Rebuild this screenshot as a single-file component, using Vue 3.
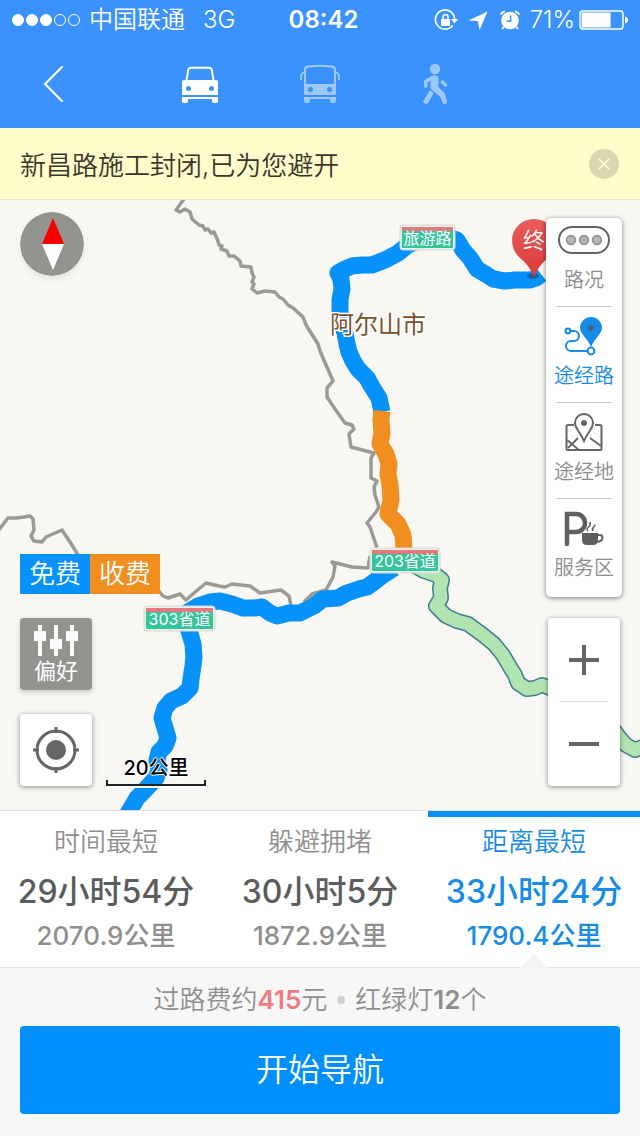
<template>
  <div class="route-page">
    <header class="header">
      <div class="status-bar">
        <div class="status-bar__left">
          <span class="status-bar__signal">
            <i
              v-for="n in 5"
              :key="n"
              class="status-bar__dot"
              :class="{ 'status-bar__dot--on': n <= 3 }"
            ></i>
          </span>
          <span class="status-bar__carrier">中国联通</span>
          <span class="status-bar__network">3G</span>
        </div>
        <span class="status-bar__time">08:42</span>
        <div class="status-bar__right">
          <svg class="status-bar__icon" viewBox="0 0 24 24">
            <path d="M18.6 17.4A9.6 9.6 0 1 1 20.6 11" fill="none" stroke="#fff" stroke-width="1.6" />
            <path d="M16.8 11H24L20.4 15.5Z" fill="#fff" />
            <rect x="7" y="11" width="9" height="7" rx="1" fill="#fff" />
            <path d="M9 11V9a2.5 2.5 0 0 1 5 0V11" fill="none" stroke="#fff" stroke-width="1.5" />
          </svg>
          <svg class="status-bar__icon" viewBox="0 0 24 24">
            <path d="M21.5 3.5L2.5 12.4L11.8 13L13.6 22Z" fill="#fff" />
          </svg>
          <svg class="status-bar__icon" viewBox="0 0 24 24">
            <circle cx="12" cy="12.5" r="8.8" fill="#fff" />
            <path d="M2.6 6.6A6 6 0 0 1 7 3.4M21.4 6.6A6 6 0 0 0 17 3.4M5.8 18.8L4 21M18.2 18.8L20 21" stroke="#fff" stroke-width="1.8" fill="none" />
            <path d="M12.6 7.4V13.2H8.6" fill="none" stroke="#3b92fd" stroke-width="1.5" />
          </svg>
          <span class="status-bar__percent">71%</span>
          <svg class="status-bar__battery" viewBox="0 0 50 20">
            <rect x="1" y="1" width="43" height="18" rx="3" fill="none" stroke="#fff" stroke-width="1.4" />
            <rect x="2.6" y="2.6" width="29" height="14.8" rx="1" fill="#fff" />
            <path d="M46 6.5C50 7 50 13 46 13.5Z" fill="#fff" />
          </svg>
        </div>
      </div>

      <nav class="nav-bar">
        <button class="nav-bar__back" type="button" aria-label="返回">
          <svg viewBox="0 0 24 40">
            <path d="M20 3L3 20L20 37" fill="none" stroke="#fff" stroke-width="2.2" stroke-linecap="round" />
          </svg>
        </button>
        <div class="nav-bar__modes">
          <button class="nav-bar__mode nav-bar__mode--active" type="button" aria-label="驾车">
            <svg viewBox="0 0 48 48">
              <path d="M10.4 21L12.2 10Q12.6 7.7 15 7.7H33Q35.4 7.7 35.8 10L37.6 21" fill="none" stroke="#fff" stroke-width="2" />
              <path
                fill="#fff"
                fill-rule="evenodd"
                d="M8 20H40Q42 20 42 22V35H6V22Q6 20 8 20ZM12.5 26A2.5 2.5 0 1 0 12.5 31A2.5 2.5 0 1 0 12.5 26ZM35.5 26A2.5 2.5 0 1 0 35.5 31A2.5 2.5 0 1 0 35.5 26Z"
              />
              <path d="M6 37H42V41Q42 43 40 43H38Q36 43 36 40.5V39H12V40.5Q12 43 10 43H8Q6 43 6 41Z" fill="#fff" />
            </svg>
          </button>
          <button class="nav-bar__mode" type="button" aria-label="公交">
            <svg viewBox="0 0 48 48">
              <path d="M9 25V9.5Q9 7 12 6.6Q24 5 36 6.6Q39 7 39 9.5V25" fill="none" stroke="#fff" stroke-width="2" />
              <path d="M9 12.5Q5 13 5 16V20M39 12.5Q43 13 43 16V20" fill="none" stroke="#fff" stroke-width="1.8" />
              <path
                fill="#fff"
                fill-rule="evenodd"
                d="M8 24H40V35H8ZM14.5 27A2.5 2.5 0 1 0 14.5 32A2.5 2.5 0 1 0 14.5 27ZM33.5 27A2.5 2.5 0 1 0 33.5 32A2.5 2.5 0 1 0 33.5 27Z"
              />
              <path d="M8 37H40V41Q40 43 38 43H36Q34 43 34 40.5V39H14V40.5Q14 43 12 43H10Q8 43 8 41Z" fill="#fff" />
            </svg>
          </button>
          <button class="nav-bar__mode" type="button" aria-label="步行">
            <svg viewBox="0 0 48 48">
              <circle cx="19" cy="9" r="5.2" fill="#fff" />
              <path d="M14.5 16.5Q18.500 14 22 16.500Q23.500 21 22 26.500L28.500 33Q30 37 31.200 42Q30 45 27 43.500L24.200 37L14.500 28.500V20.500L11.500 22.500V26.500Q9.500 29 8 26.500V20.500Z" fill="#fff" />
              <path d="M26.500 22L29.500 25" stroke="#fff" stroke-width="3.600" stroke-linecap="round" fill="none" />
              <path d="M14 30L17.800 33L12 43Q8.500 45 7 41.500Z" fill="#fff" />
            </svg>
          </button>
        </div>
      </nav>
    </header>

    <div class="notice">
      <span class="notice__text">新昌路施工封闭,已为您避开</span>
      <button class="notice__close" type="button" aria-label="关闭">
        <svg viewBox="0 0 30 30">
          <circle cx="15" cy="15" r="15" fill="#dcd7b0" />
          <path d="M9.5 9.5L20.5 20.5M20.5 9.5L9.5 20.5" stroke="#fffbd3" stroke-width="1.6" />
        </svg>
      </button>
    </div>

    <main class="map">
      <svg class="map__canvas" viewBox="0 200 640 610" preserveAspectRatio="xMidYMid slice">
        <defs>
          <linearGradient id="pinFill" x1="0" y1="0" x2="0" y2="1">
            <stop offset="0" stop-color="#ea5c59" />
            <stop offset="1" stop-color="#d93a3a" />
          </linearGradient>
        </defs>

        <!-- minor roads -->
        <g class="map__minor">
          <path v-for="road in minorRoads" :key="road" :d="road" />
        </g>

        <!-- expressway -->
        <path class="map__express-edge" :d="expressway" />
        <path class="map__express" :d="expressway" />

        <!-- planned route -->
        <path class="map__route" d="M541 274L536 278L530 280L515 280L505 281L493 279L487 275L477 269L470 258L463 250L457 240L448 237L430 237L420 240L408 245L398 253L387 259L372 265L362 265L352 266L345 269L338 273L341 279L342 289L340 300L340 312L342 322L345 333L347 344L349 352L353 361L358 369L367 378L372 387L379 398L382 412" />
        <path class="map__route" d="M394 568L383 575L374 582L367 587L359 589L347 593L338 598L323 599L314 606L300 613L289 613L277 616L270 613L262 607L254 608L243 608L232 604L220 601L210 602L198 606L188 612L187 624L190 634L193 644L194 657L193 666L191 679L190 688L182 696L171 701L165 708L162 718L165 728L168 738L165 746L159 752L157 760L159 770L156 778L145 790L137 798L127 815" />
        <path class="map__route map__route--toll" d="M382 411L381 420L382 433L380 444L386 454L389 464L388 474L390 485L391 500L388 514L398 524L403 535L404 550" />

        <text class="map__city" x="330" y="333">阿尔山市</text>

        <g v-for="sign in roadSigns" :key="sign.name">
          <rect class="map__sign-edge" :x="sign.x" :y="sign.y" :width="sign.width" height="25" rx="3" />
          <rect class="map__sign" :x="sign.x + 2" :y="sign.y + 2" :width="sign.width - 4" height="21" rx="1" />
          <rect class="map__sign-top" :x="sign.x + 2" :y="sign.y + 2" :width="sign.width - 4" height="4" />
          <text class="map__sign-text" :x="sign.x + sign.width / 2" :y="sign.y + 19">{{ sign.name }}</text>
        </g>

        <!-- destination pin -->
        <ellipse cx="533" cy="276" rx="6" ry="3" fill="#1d5f9f" />
        <path d="M534 277Q530 266 519 257Q512 250 512 240A22 21 0 0 1 556 240Q556 250 549 257Q538 266 534 277Z" fill="url(#pinFill)" />
        <text class="map__pin-text" x="534" y="248">终</text>
      </svg>

      <svg class="map__compass" viewBox="0 0 64 64">
        <circle cx="32" cy="32" r="32" fill="#939390" />
        <path d="M33 6L44 32H22Z" fill="#f80000" />
        <path d="M33 58L44 32H22Z" fill="#fff" />
      </svg>

      <div class="map__left">
        <div class="legend">
          <span class="legend__item">免费</span>
          <span class="legend__item legend__item--toll">收费</span>
        </div>
        <button class="prefer" type="button">
          <svg class="prefer__icon" viewBox="2 0 48 34">
            <path d="M10 2V33M26 2V33M42 2V33" stroke="#fff" stroke-width="4" />
            <path d="M4 8H16V18H4ZM20 16H32V26H20ZM36 8H48V18H36Z" fill="#fff" />
          </svg>
          <span class="prefer__text">偏好</span>
        </button>
        <button class="locate" type="button" aria-label="定位">
          <svg viewBox="0 0 48 48">
            <circle cx="24" cy="24" r="19" fill="none" stroke="#666" stroke-width="3" />
            <circle cx="24" cy="24" r="10" fill="#666" />
            <path d="M24 1V7M24 41V47M1 24H7M41 24H47" stroke="#666" stroke-width="3" />
          </svg>
        </button>
      </div>

      <div class="scale">
        <span class="scale__text">20公里</span>
        <span class="scale__bar"></span>
      </div>

      <div class="tools">
        <button class="tools__item" type="button">
          <span class="tools__icon">
            <svg width="52" height="28" viewBox="0 0 52 28">
              <rect x="1" y="1" width="50" height="26" rx="13" fill="#fff" stroke="#666" stroke-width="2" />
              <g fill="#b5b5b5" stroke="#8c8c8c" stroke-width="1.5">
                <circle cx="13" cy="14" r="4.4" />
                <circle cx="26" cy="14" r="4.4" />
                <circle cx="39" cy="14" r="4.4" />
              </g>
            </svg>
          </span>
          <span class="tools__label">路况</span>
        </button>
        <button class="tools__item tools__item--active" type="button">
          <span class="tools__icon">
            <svg width="40" height="40" viewBox="0 0 40 40">
              <path d="M6 15H10A5 5 0 0 1 10 25H7A5 5 0 0 0 7 35H24" fill="none" stroke="#168be8" stroke-width="2" />
              <circle cx="4" cy="15" r="2.4" fill="#fff" stroke="#168be8" stroke-width="2" />
              <circle cx="27" cy="35" r="3.4" fill="#fff" stroke="#168be8" stroke-width="2" />
              <path d="M27 31Q25 26 19 19Q16 15 16 12A11 11 0 0 1 38 12Q38 15 35 19Q29 26 27 31Z" fill="#168be8" />
              <circle cx="27" cy="12" r="2.8" fill="#4c6680" />
            </svg>
          </span>
          <span class="tools__label">途经路</span>
        </button>
        <button class="tools__item" type="button">
          <span class="tools__icon">
            <svg width="40" height="40" viewBox="0 0 40 40">
              <path d="M10 13H4Q2.5 13 2.5 14.5V36.5Q2.5 38 4 38H36Q37.5 38 37.5 36.5V14.5Q37.5 13 36 13H31" fill="none" stroke="#666" stroke-width="2" />
              <path d="M3 28L15 38M4 36L14 26M26 26L37 34" fill="none" stroke="#666" stroke-width="1.8" />
              <path d="M20 29Q18 24 14 18.5Q11 14.5 11 11A9 9 0 0 1 29 11Q29 14.5 26 18.5Q22 24 20 29Z" fill="#fff" stroke="#666" stroke-width="2" />
              <circle cx="20" cy="11" r="3" fill="#666" />
            </svg>
          </span>
          <span class="tools__label">途经地</span>
        </button>
        <button class="tools__item" type="button">
          <span class="tools__icon">
            <svg width="40" height="40" viewBox="0 0 40 40">
              <path d="M3 36V6H12A8.5 8.5 0 0 1 12 24H4" fill="none" stroke="#5f5f5f" stroke-width="4.5" stroke-linecap="round" />
              <path d="M18 25H34V32Q34 37 29 37H23Q18 37 18 32Z" fill="#5f5f5f" />
              <path d="M33 27H36Q38.5 27 38.5 30Q38.5 33.5 32 34" fill="none" stroke="#5f5f5f" stroke-width="2" />
              <path d="M24 23Q22 21 24.5 19Q27 17 26 14M29 23Q27.5 21 29.5 19.5Q31 18.5 30.5 16.5" fill="none" stroke="#5f5f5f" stroke-width="1.6" />
            </svg>
          </span>
          <span class="tools__label">服务区</span>
        </button>
      </div>

      <div class="zoom">
        <button class="zoom__btn" type="button" aria-label="放大">
          <svg viewBox="0 0 32 32"><path d="M16 1V31M1 16H31" stroke="#666" stroke-width="4" /></svg>
        </button>
        <button class="zoom__btn" type="button" aria-label="缩小">
          <svg viewBox="0 0 32 32"><path d="M1 16H31" stroke="#666" stroke-width="4" /></svg>
        </button>
      </div>
    </main>

    <section class="plans">
      <button
        v-for="(plan, index) in plans"
        :key="plan.title"
        class="plans__item"
        :class="{ 'plans__item--active': index === current }"
        type="button"
        @click="current = index"
      >
        <span class="plans__title">{{ plan.title }}</span>
        <span class="plans__time">{{ plan.time }}</span>
        <span class="plans__distance">{{ plan.distance }}</span>
      </button>
    </section>

    <footer class="footer">
      <p class="footer__info">
        <span>过路费约<b class="footer__fee">415</b>元</span>
        <i class="footer__dot"></i>
        <span>红绿灯<b class="footer__lights">12</b>个</span>
      </p>
      <button class="footer__start" type="button">开始导航</button>
    </footer>
  </div>
</template>

<script setup>
import { ref } from 'vue'

const current = ref(2)

const plans = [
  { title: '时间最短', time: '29小时54分', distance: '2070.9公里' },
  { title: '躲避拥堵', time: '30小时5分', distance: '1872.9公里' },
  { title: '距离最短', time: '33小时24分', distance: '1790.4公里' }
]

const roadSigns = [
  { name: '旅游路', x: 400, y: 225, width: 55 },
  { name: '203省道', x: 370, y: 548, width: 70 },
  { name: '303省道', x: 144, y: 606, width: 71 }
]

const minorRoads = [
  'M184 199L176 210L180 212L185 209L190 212L192 219L199 225L203 226L205 230L208 229L211 233L214 232L218 241L219 245L222 246L221 249L227 251L229 256L234 256L240 261L241 266L251 267L252 273L254 277L252 282L254 284L252 289L257 293L265 291L275 292L279 297L283 299L288 305L293 308L303 317L306 325L318 344L320 351L333 381L327 388L327 397L335 409L345 423L352 425L354 429L349 434L351 447L374 453L371 458L371 478L377 481L374 487L375 495L379 507L376 512L367 523L370 527L377 548',
  'M370 556L368 568L352 567L332 562L335 566L333 577L326 590L312 594L304 602',
  'M-2 531L8 518L17 518L30 516L33 519L34 530L31 536L34 541L42 542L46 537L62 530L70 542L80 558L110 580L158 590L163 596L168 598L180 594L186 600L194 593L206 583L219 586L225 587L232 584L250 586L260 593L281 590L289 596L291 606'
]

const expressway =
  'M415 566L424 571L436 575L442 580L440 588L441 598L436 606L446 616L457 621L468 624L483 635L494 644L503 655L510 667L515 675L518 683L527 689L535 688L542 685L550 688L575 705L612 727L619 737L626 745L635 750L645 746'
</script>

<style>
body {
  margin: 0;
}
</style>

<style scoped>
.route-page {
  min-height: 100vh;
  display: flex;
  flex-direction: column;
  background-color: #f7f7f7;
  font-family: Inter, "Noto Sans CJK SC", sans-serif;
  font-weight: 350;
}

button {
  margin: 0;
  padding: 0;
  border: none;
  background: none;
  font: inherit;
  color: inherit;
  cursor: pointer;
}

svg {
  display: block;
}

.header {
  background-color: #3b92fd;
  color: #ffffff;
}

.status-bar {
  display: grid;
  grid-template-columns: 1fr auto 1fr;
  align-items: center;
  height: 40px;
  padding: 0 11px 0 12px;
  font-size: 24px;
  line-height: 40px;
}

.status-bar__left,
.status-bar__right {
  display: flex;
  align-items: center;
}

.status-bar__signal {
  display: flex;
  gap: 2px;
  margin-right: 9px;
}

.status-bar__dot {
  box-sizing: border-box;
  width: 12px;
  height: 12px;
  border: 1px solid #ffffff;
  border-radius: 50%;
}

.status-bar__dot--on {
  background-color: #ffffff;
}

.status-bar__carrier {
  margin-right: 18px;
}

.status-bar__time {
  padding-left: 6px;
  font-weight: 600;
}

.status-bar__right {
  justify-content: flex-end;
  gap: 8px;
}

.status-bar__icon {
  width: 24px;
  height: 24px;
}

.status-bar__percent {
  margin-right: -4px;
}

.status-bar__battery {
  width: 50px;
  height: 20px;
}

.nav-bar {
  display: grid;
  grid-template-columns: 108px 1fr 108px;
  height: 88px;
}

.nav-bar__back {
  display: flex;
  align-items: center;
  justify-content: center;
}

.nav-bar__back svg {
  width: 24px;
  height: 40px;
}

.nav-bar__modes {
  display: flex;
  align-items: center;
  justify-content: center;
  gap: 72px;
}

.nav-bar__mode {
  opacity: 0.5;
}

.nav-bar__mode--active {
  opacity: 1;
}

.nav-bar__mode svg {
  width: 48px;
  height: 48px;
}

.notice {
  display: flex;
  align-items: center;
  justify-content: space-between;
  height: 71px;
  padding: 0 21px 0 20px;
  border-bottom: 1px solid #e6e3d6;
  background-color: #fffbcb;
  color: #3a3629;
  font-size: 26px;
}

.notice__close svg {
  width: 30px;
  height: 30px;
}

.map {
  position: relative;
  flex: 1;
  min-height: 610px;
  background-color: #f9f7f3;
  overflow: hidden;
}

.map__canvas {
  position: absolute;
  inset: 0;
  width: 100%;
  height: 100%;
}

.map__minor path {
  fill: none;
  stroke: #9c9a95;
  stroke-width: 3.5;
  stroke-linejoin: round;
}

.map__route {
  fill: none;
  stroke: #0691fb;
  stroke-width: 17;
  stroke-linejoin: round;
}

.map__route--toll {
  stroke: #f18e20;
}

.map__express-edge {
  fill: none;
  stroke: #3b7d93;
  stroke-width: 16;
  stroke-linejoin: round;
}

.map__express {
  fill: none;
  stroke: #b2e4b2;
  stroke-width: 13;
  stroke-linejoin: round;
}

.map__city {
  fill: #79522c;
  stroke: #ffffff;
  stroke-width: 3px;
  paint-order: stroke;
  font-size: 24px;
  font-weight: 400;
}

.map__sign-edge {
  fill: #e4f3ea;
  stroke: #d8d8d4;
  stroke-width: 1;
}

.map__sign {
  fill: #35c49c;
}

.map__sign-top {
  fill: #e2797c;
}

.map__sign-text {
  fill: #ffffff;
  font-size: 16px;
  font-weight: 400;
  text-anchor: middle;
}

.map__pin-text {
  fill: #ffffff;
  font-size: 22px;
  text-anchor: middle;
}

.map__compass {
  position: absolute;
  top: 12px;
  left: 20px;
  width: 64px;
  height: 64px;
  border-radius: 50%;
  box-shadow: 0 3px 6px rgba(0, 0, 0, 0.08);
}

.map__left {
  position: absolute;
  left: 20px;
  bottom: 24px;
  display: flex;
  flex-direction: column;
  align-items: flex-start;
  gap: 24px;
}

.legend {
  display: flex;
}

.legend__item {
  width: 70px;
  background-color: #0691fb;
  color: #ffffff;
  font-size: 26px;
  line-height: 40px;
  text-align: center;
}

.legend__item--toll {
  background-color: #f18e20;
}

.prefer {
  display: flex;
  flex-direction: column;
  align-items: center;
  justify-content: center;
  width: 72px;
  height: 72px;
  border-radius: 4px;
  background-color: #939390;
  box-shadow: 0 2px 5px rgba(0, 0, 0, 0.2);
  color: #ffffff;
}

.prefer__icon {
  width: 48px;
  height: 34px;
}

.prefer__text {
  font-size: 22px;
  font-weight: 400;
  line-height: 28px;
}

.locate {
  display: flex;
  align-items: center;
  justify-content: center;
  width: 72px;
  height: 72px;
  border-radius: 4px;
  background-color: #ffffff;
  box-shadow: 0 1px 5px rgba(0, 0, 0, 0.45);
}

.locate svg {
  width: 48px;
  height: 48px;
}

.scale {
  position: absolute;
  left: 106px;
  bottom: 24px;
  display: flex;
  flex-direction: column;
  align-items: center;
  width: 100px;
}

.scale__text {
  color: #000000;
  font-size: 20px;
  font-weight: 500;
  line-height: 24px;
  text-shadow: 1px 0 #ffffff, -1px 0 #ffffff, 0 1px #ffffff, 0 -1px #ffffff;
}

.scale__bar {
  box-sizing: border-box;
  width: 100%;
  height: 6px;
  border: 2px solid #222222;
  border-top: none;
  box-shadow: 0 2px #ffffff;
}

.tools {
  position: absolute;
  top: 18px;
  right: 18px;
  display: flex;
  flex-direction: column;
  width: 56px;
  padding: 0 10px;
  border-radius: 5px;
  background-color: #ffffff;
  box-shadow: 0 1px 5px rgba(0, 0, 0, 0.5);
}

.tools__item {
  display: flex;
  flex-direction: column;
  align-items: center;
  padding: 9px 0 6px;
  border-bottom: 1px solid #c8c8c8;
  color: #8c8c8c;
}

.tools__item:first-child {
  padding-top: 2px;
}

.tools__item:last-child {
  padding-bottom: 9px;
  border-bottom: none;
}

.tools__item--active {
  color: #168be8;
}

.tools__icon {
  display: flex;
  align-items: center;
  height: 40px;
}

.tools__label {
  font-size: 20px;
  line-height: 40px;
  white-space: nowrap;
}

.zoom {
  position: absolute;
  right: 20px;
  bottom: 24px;
  display: flex;
  flex-direction: column;
  width: 48px;
  padding: 0 12px;
  border-radius: 4px;
  background-color: #ffffff;
  box-shadow: 0 1px 5px rgba(0, 0, 0, 0.45);
}

.zoom__btn {
  display: flex;
  align-items: center;
  justify-content: center;
  height: 84px;
}

.zoom__btn + .zoom__btn {
  box-shadow: 0 -1px #d4dcdc;
}

.zoom__btn svg {
  width: 32px;
  height: 32px;
}

.plans {
  display: grid;
  grid-template-columns: repeat(3, 1fr);
  column-gap: 2px;
  border-top: 1px solid #dedede;
  border-bottom: 1px solid #e4e4e4;
  background-color: #ffffff;
}

.plans__item {
  position: relative;
  display: flex;
  flex-direction: column;
  align-items: center;
  padding-bottom: 12px;
  border-top: 6px solid transparent;
  color: #8f8f8f;
}

.plans__title {
  font-size: 26px;
  line-height: 50px;
}

.plans__time {
  color: #5c5c5c;
  font-size: 32px;
  font-weight: 500;
  line-height: 50px;
}

.plans__distance {
  font-size: 26px;
  font-weight: 500;
  line-height: 38px;
}

.plans__item--active {
  border-top-color: #088df4;
  color: #168be8;
}

.plans__item--active .plans__time {
  color: #168be8;
}

.plans__item--active::after {
  content: "";
  position: absolute;
  bottom: -1px;
  left: 50%;
  margin-left: -14px;
  border: 14px solid transparent;
  border-top: none;
  border-bottom-color: #f3f3f3;
}

.footer {
  padding: 12px 20px 22px;
}

.footer__info {
  display: flex;
  align-items: center;
  justify-content: center;
  gap: 10px;
  margin: 0 0 6px;
  color: #8f8f8f;
  font-size: 26px;
  line-height: 40px;
}

.footer__fee {
  color: #f37a7c;
  font-weight: 600;
}

.footer__lights {
  font-weight: 600;
}

.footer__dot {
  width: 8px;
  height: 8px;
  border-radius: 50%;
  background-color: #d2d2d2;
}

.footer__start {
  display: block;
  width: 100%;
  border-radius: 4px;
  background-color: #008fff;
  color: #ffffff;
  font-size: 32px;
  line-height: 88px;
}
</style>
